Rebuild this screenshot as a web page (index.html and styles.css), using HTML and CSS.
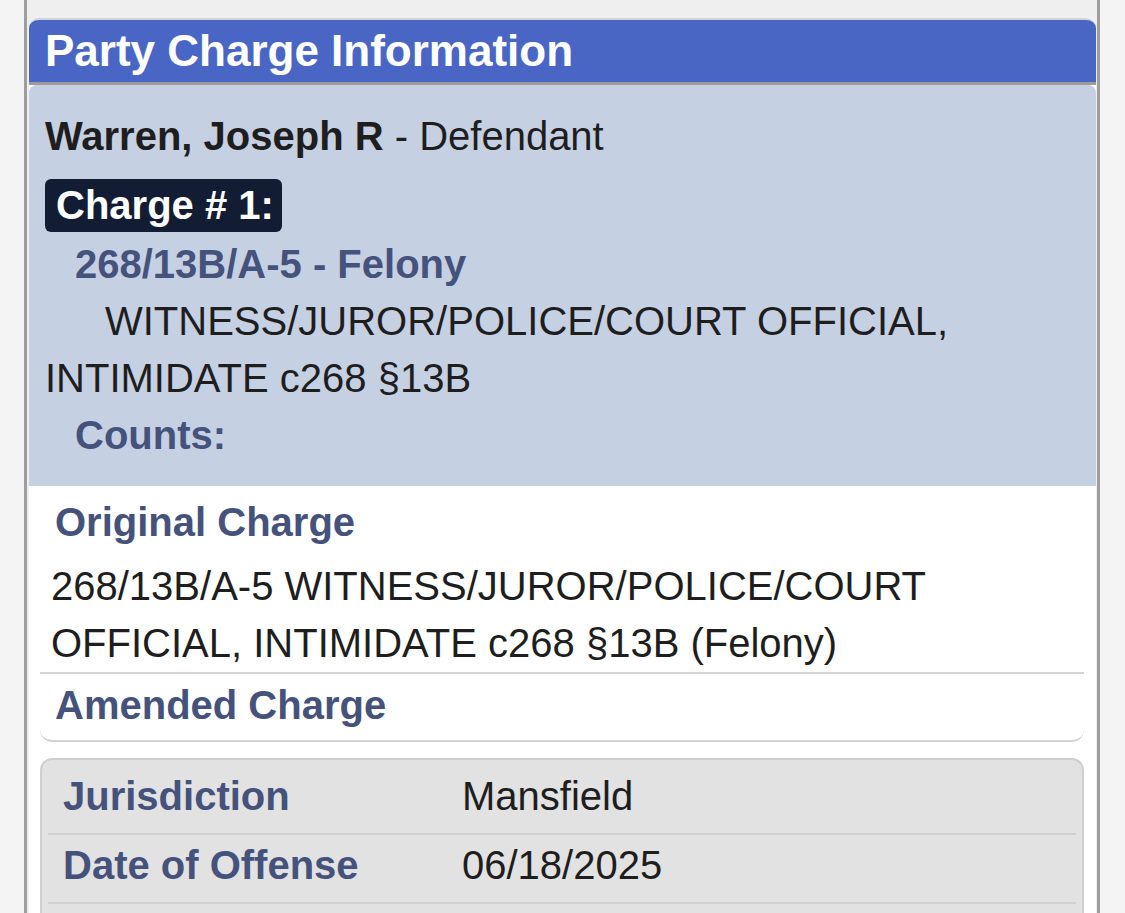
FILE: index.html
```html
<!DOCTYPE html>
<html>
<head>
<meta charset="utf-8">
<link rel="stylesheet" href="styles.css">
</head>
<body>
<div class="frame">
  <div class="card">
    <div class="card-header">Party Charge Information</div>
    <div class="card-body">
      <div class="party">
        <div class="party-name"><b>Warren, Joseph R</b> - Defendant</div>
        <div class="badge">Charge # 1:</div>
        <div class="charge-code">268/13B/A-5 - Felony</div>
        <div class="charge-desc">WITNESS/JUROR/POLICE/COURT OFFICIAL, INTIMIDATE c268 §13B</div>
        <div class="counts">Counts:</div>
      </div>
      <div class="details">
        <div class="charge-box">
          <div class="section">
            <div class="section-title">Original Charge</div>
            <div class="section-text">268/13B/A-5 WITNESS/JUROR/POLICE/COURT OFFICIAL, INTIMIDATE c268 §13B (Felony)</div>
          </div>
          <div class="section last">
            <div class="section-title">Amended Charge</div>
          </div>
        </div>
        <div class="info-box">
          <div class="info-row">
            <div class="info-label">Jurisdiction</div>
            <div class="info-value">Mansfield</div>
          </div>
          <div class="info-row">
            <div class="info-label">Date of Offense</div>
            <div class="info-value">06/18/2025</div>
          </div>
        </div>
      </div>
    </div>
  </div>
</div>
</body>
</html>
```

FILE: styles.css
```css
html, body {
  margin: 0;
  padding: 0;
}
body {
  background: #f4f4f4;
  font-family: "Liberation Sans", Arial, sans-serif;
  font-size: 40px;
  line-height: 57px;
  color: #1e1e1e;
  overflow: hidden;
}
.frame {
  margin-left: 24px;
  width: 1067px;
  min-height: 913px;
  background: #efefef;
  border-left: 3px solid #9e9e9e;
  border-right: 3px solid #9e9e9e;
  padding: 18px 1px 0 2px;
}
.card {
  display: flex;
  flex-direction: column;
}
.card-header {
  background: #4a66c4;
  color: #ffffff;
  font-weight: bold;
  font-size: 44px;
  line-height: 62px;
  height: 62px;
  padding-left: 16px;
  border-top: 2px solid #d5d5d5;
  border-bottom: 3px solid #9c9c9c;
  border-radius: 10px 10px 0 0;
}
.card-body {
  background: #ffffff;
}
.party {
  background: #c6d0e3;
  border-radius: 8px 8px 0 0;
  padding: 23px 16px 22px 16px;
}
.party-name {
  line-height: 57px;
}
.badge {
  display: block;
  width: fit-content;
  margin-top: 14px;
  background: #121c33;
  color: #ffffff;
  font-weight: bold;
  line-height: 45px;
  padding: 4px 8px 4px 11px;
  border-radius: 6px;
}
.charge-code {
  margin-top: 4px;
  padding-left: 30px;
  font-weight: bold;
  color: #45527b;
}
.charge-desc {
  text-indent: 60px;
}
.counts {
  padding-left: 30px;
  font-weight: bold;
  color: #45527b;
}
.details {
  padding: 8px 12px 0 11px;
}
.charge-box {
  border-bottom: 2px solid #d4d4d4;
  border-radius: 0 0 12px 12px;
}
.section {
  border-bottom: 2px solid #d4d4d4;
}
.section.last {
  border-bottom: none;
  padding-top: 3px;
  padding-bottom: 6px;
}
.section-title {
  padding-left: 15px;
  font-weight: bold;
  color: #45527b;
}
.section-text {
  margin-top: 7px;
  padding-left: 11px;
}
.info-box {
  margin-top: 16px;
  background: #e2e2e2;
  border: 2px solid #cfcfcf;
  border-radius: 12px;
  padding: 6px 6px 0 6px;
  min-height: 200px;
}
.info-row {
  display: grid;
  grid-template-columns: 399px 1fr;
  padding: 2px 0 8px 15px;
  border-bottom: 2px solid #d0d0d0;
}
.info-label {
  font-weight: bold;
  color: #45527b;
}
.info-value {
  color: #1e1e1e;
}
```
